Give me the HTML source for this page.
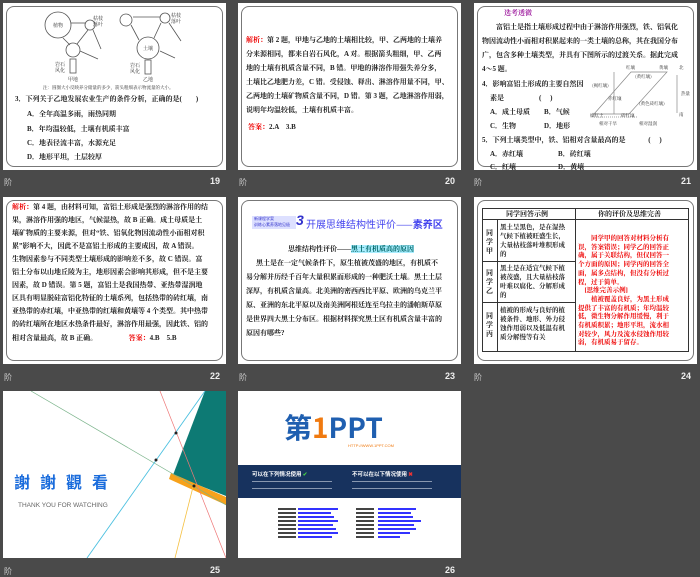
<!DOCTYPE html>
<html><head><meta charset="utf-8"><style>
*{margin:0;padding:0;box-sizing:border-box}
body{width:700px;height:577px;background:#4a4a4a;position:relative;overflow:hidden;font-family:"Liberation Sans","Noto Sans CJK SC",sans-serif}
.s{position:absolute;width:223px;height:167px;background:#fff;overflow:hidden}
.b{position:absolute;left:3px;top:3px;right:3px;bottom:3px;border:1px solid #777;border-radius:8px}
.t{position:absolute;font-size:7px;font-weight:bold;color:#222;white-space:nowrap;line-height:9px;font-family:"Liberation Serif","Noto Serif CJK SC",serif}
.r{color:#e00}
.n{position:absolute;color:#eee;font-size:9px;font-weight:bold}
.i{position:absolute;color:#ccc;font-size:8px}
</style></head><body>

<!-- slide 19 -->
<div class="s" style="left:3px;top:3px"><div class="b"></div>
<svg width="223" height="90" style="position:absolute;left:0;top:0" font-size="5" fill="#333" font-family="Noto Serif CJK SC,serif">
<g fill="none" stroke="#555" stroke-width="0.8">
<circle cx="55" cy="22" r="13"/><circle cx="87" cy="22" r="5"/><circle cx="70" cy="47" r="7"/>
<line x1="68" y1="20" x2="82" y2="20"/><line x1="85" y1="27" x2="74" y2="41"/><line x1="90" y1="27" x2="98" y2="46"/><line x1="77" y1="48" x2="95" y2="56"/><line x1="60" y1="35" x2="67" y2="42"/>
<rect x="67" y="56" width="6" height="14"/>
<circle cx="123" cy="17" r="6"/><circle cx="162" cy="15" r="5"/><circle cx="145" cy="45" r="11"/>
<line x1="130" y1="14" x2="157" y2="14"/><line x1="158" y1="20" x2="151" y2="35"/><line x1="166" y1="20" x2="178" y2="38"/><line x1="157" y1="48" x2="172" y2="55"/><line x1="128" y1="22" x2="136" y2="37"/>
<rect x="142" y="57" width="6" height="14"/>
</g>
<text x="50" y="24">植物</text><text x="90" y="17">枯枝</text><text x="90" y="23">落叶</text><text x="140" y="47">土壤</text><text x="168" y="14">枯枝</text><text x="168" y="20">落叶</text>
<text x="52" y="63">岩石</text><text x="52" y="69">风化</text><text x="127" y="64">岩石</text><text x="127" y="70">风化</text>
<text x="65" y="78">甲地</text><text x="140" y="78">乙地</text>
<text x="40" y="86" font-size="4.5">注：圆圈大小反映养分储量的多少，箭头粗细表示物流量的大小。</text>
</svg>
<div class="t" style="left:12px;top:92px">3．下列关于乙地发展农业生产的条件分析，正确的是(　　)</div>
<div class="t" style="left:24px;top:107px">A．全年高温多雨，雨热同期</div>
<div class="t" style="left:24px;top:122px">B．年均温较低，土壤有机质丰富</div>
<div class="t" style="left:24px;top:136px">C．地表径流丰富，水源充足</div>
<div class="t" style="left:24px;top:150px">D．地形平坦，土层较厚</div>
</div>
<div class="i" style="left:4px;top:177px">阶</div><div class="n" style="left:210px;top:176px">19</div>

<!-- slide 20 -->
<div class="s" style="left:238px;top:3px"><div class="b"></div>
<div class="t" style="left:8px;top:33px"><span class="r">解析：</span>第 2 题，甲地与乙地的土壤相比较，甲、乙两地的土壤养</div>
<div class="t" style="left:8px;top:47px">分来源相同，都来自岩石风化，A 对。根据箭头粗细，甲、乙两</div>
<div class="t" style="left:8px;top:61px">地的土壤有机质含量不同，B 错。甲地的淋溶作用强失养分多，</div>
<div class="t" style="left:8px;top:75px">土壤比乙地肥力差，C 错。受侵蚀、释出、淋溶作用量不同，甲、</div>
<div class="t" style="left:8px;top:89px">乙两地的土壤矿物质含量不同，D 错。第 3 题，乙地淋溶作用弱，</div>
<div class="t" style="left:8px;top:103px">说明年均温较低，土壤有机质丰富。</div>
<div class="t" style="left:10px;top:120px"><span class="r">答案：</span>2.A　3.B</div>
</div>
<div class="i" style="left:239px;top:177px">阶</div><div class="n" style="left:445px;top:176px">20</div>

<!-- slide 21 -->
<div class="s" style="left:474px;top:3px"><div class="b"></div>
<div class="t" style="left:30px;top:6px;color:#a020a0">选考透微</div>
<div class="t" style="left:22px;top:20px">富铝土是指土壤形成过程中由于淋溶作用强烈，铁、铝氧化</div>
<div class="t" style="left:8px;top:34px">物因流动性小而相对积累起来的一类土壤的总称，其在我国分布</div>
<div class="t" style="left:8px;top:48px">广，包含多种土壤类型，并具有下图所示的过渡关系。据此完成</div>
<div class="t" style="left:8px;top:62px">4～5 题。</div>
<div class="t" style="left:8px;top:77px">4．影响富铝土形成的主要自然因</div>
<div class="t" style="left:16px;top:91px">素是　　　　　(　 )</div>
<div class="t" style="left:16px;top:105px">A．成土母质　　B．气候</div>
<div class="t" style="left:16px;top:119px">C．生物　　　　D．地形</div>
<div class="t" style="left:8px;top:133px">5．下列土壤类型中，铁、铝相对含量最高的是　　　 (　 )</div>
<div class="t" style="left:16px;top:147px">A．赤红壤　　　　　B．砖红壤</div>
<div class="t" style="left:16px;top:160px">C．红壤　　　　　　D．黄壤</div>
<svg width="223" height="167" style="position:absolute;left:0;top:0" font-size="4.5" fill="#333" font-family="Noto Serif CJK SC,serif">
<g fill="none" stroke="#888" stroke-width="0.7"><path d="M120 111 L157 69 L193 69 L155 111 Z"/><line x1="140" y1="69" x2="140" y2="111"/><line x1="163" y1="114" x2="120" y2="114" stroke-dasharray="1,1"/><line x1="203" y1="72" x2="203" y2="110"/></g>
<text x="152" y="66">红壤</text><text x="185" y="66">黄壤</text><text x="161" y="75">(黄红壤)</text><text x="118" y="84">(褐红壤)</text><text x="134" y="97">赤红壤</text><text x="165" y="102">(黄色砖红壤)</text><text x="116" y="114">燥红土</text><text x="147" y="114">砖红壤</text><text x="125" y="122">相对干旱</text><text x="165" y="122">相对湿润</text><text x="205" y="66">北</text><text x="207" y="92">热量</text><text x="205" y="113">南</text>
</svg>
</div>
<div class="i" style="left:474px;top:177px">阶</div><div class="n" style="left:681px;top:176px">21</div>

<!-- slide 22 -->
<div class="s" style="left:3px;top:197px"><div class="b"></div>
<div class="t" style="left:9px;top:6px"><span class="r">解析：</span>第 4 题，由材料可知，富铝土形成是强烈的淋溶作用的结</div>
<div class="t" style="left:9px;top:19px">果，淋溶作用强的地区，气候湿热，故 B 正确。成土母质是土</div>
<div class="t" style="left:9px;top:32px">壤矿物质的主要来源，但对“铁、铝氧化物因流动性小而相对积</div>
<div class="t" style="left:9px;top:45px">累”影响不大，因此不是富铝土形成的主要成因，故 A 错误。</div>
<div class="t" style="left:9px;top:58px">生物因素参与不同类型土壤形成的影响差不多，故 C 错误。富</div>
<div class="t" style="left:9px;top:71px">铝土分布以山地丘陵为主，地形因素会影响其形成，但不是主要</div>
<div class="t" style="left:9px;top:84px">因素，故 D 错误。第 5 题，富铝土是我国热带、亚热带湿润地</div>
<div class="t" style="left:9px;top:97px">区具有明显脱硅富铝化特征的土壤系列，包括热带的砖红壤，南</div>
<div class="t" style="left:9px;top:110px">亚热带的赤红壤，中亚热带的红壤和黄壤等 4 个类型。其中热带</div>
<div class="t" style="left:9px;top:123px">的砖红壤所在地区水热条件最好，淋溶作用最强，因此铁、铝的</div>
<div class="t" style="left:9px;top:137px">相对含量最高，故 B 正确。　　　　　<span class="r">答案：</span>4.B　5.B</div>
</div>
<div class="i" style="left:4px;top:372px">阶</div><div class="n" style="left:210px;top:371px">22</div>

<!-- slide 23 -->
<div class="s" style="left:238px;top:197px"><div class="b"></div>
<div style="position:absolute;left:14px;top:19px;width:44px;height:13px;background:#dde0ff;font-size:4px;color:#33c;line-height:6px;padding-left:2px">新课程学案<br>训练心素养落地见极</div>
<div style="position:absolute;left:58px;top:15px;font-size:14px;font-weight:bold;color:#33c;font-style:italic">3</div>
<div style="position:absolute;left:68px;top:19px;font-size:10px;color:#44e;white-space:nowrap;font-family:'Noto Sans CJK SC',sans-serif">开展思维结构性评价——<b>素养区</b></div>
<div class="t" style="left:50px;top:48px">思维结构性评价——<span style="color:#066;background:#aef">黑土有机质高的原因</span></div>
<div class="t" style="left:18px;top:62px">黑土是在一定气候条件下，原生植被茂盛的地区，有机质不</div>
<div class="t" style="left:8px;top:76px">易分解并历经千百年大量积累而形成的一种肥沃土壤。黑土土层</div>
<div class="t" style="left:8px;top:90px">深厚，有机质含量高。北美洲的密西西比平原、欧洲的乌克兰平</div>
<div class="t" style="left:8px;top:104px">原、亚洲的东北平原以及南美洲阿根廷连至乌拉圭的潘帕斯草原</div>
<div class="t" style="left:8px;top:118px">是世界四大黑土分布区。根据材料探究黑土区有机质含量丰富的</div>
<div class="t" style="left:8px;top:132px">原因有哪些?</div>
</div>
<div class="i" style="left:239px;top:372px">阶</div><div class="n" style="left:445px;top:371px">23</div>

<!-- slide 24 -->
<div class="s" style="left:474px;top:197px"><div class="b"></div>
<div style="position:absolute;left:8px;top:11px;width:207px;height:144px;border:1px solid #333"></div>
<div style="position:absolute;left:8px;top:11px;width:207px;height:12px;border-bottom:1px solid #333"></div>
<div style="position:absolute;left:101px;top:11px;width:1px;height:144px;background:#333"></div>
<div style="position:absolute;left:23px;top:23px;width:1px;height:132px;background:#333"></div>
<div style="position:absolute;left:8px;top:64px;width:93px;height:1px;background:#333"></div>
<div style="position:absolute;left:8px;top:105px;width:93px;height:1px;background:#333"></div>
<div class="t" style="left:32px;top:13px">同学回答示例</div>
<div class="t" style="left:124px;top:13px">你的评价及思维完善</div>
<div class="t" style="left:12px;top:32px;line-height:9px">同<br>学<br>甲</div>
<div class="t" style="left:12px;top:72px;line-height:9px">同<br>学<br>乙</div>
<div class="t" style="left:12px;top:115px;line-height:9px">同<br>学<br>丙</div>
<div class="t" style="left:26px;top:26px;line-height:9px;font-size:6.5px">黑土呈黑色，是在湿热<br>气候下植被旺盛生长，<br>大量枯枝落叶堆积形成<br>的</div>
<div class="t" style="left:26px;top:67px;line-height:9px;font-size:6.5px">黑土是在适宜气候下植<br>被茂盛，且大量枯枝落<br>叶难以腐化、分解形成<br>的</div>
<div class="t" style="left:26px;top:109px;line-height:9px;font-size:6.5px">植被的形成与良好的植<br>被条件、地形、外力侵<br>蚀作用弱以及低温有机<br>质分解慢等有关</div>
<div class="t r" style="left:104px;top:38px;line-height:8.7px;font-size:6.5px">　　同学甲的回答对材料分析有<br>误，答案错误；同学乙的回答正<br>确，属于关联结构，但仅回答一<br>个方面的原因；同学丙的回答全<br>面，属多点结构，但没有分析过<br>程，过于简单。<br>　[思维完善示例]<br>　　植被覆盖良好，为黑土形成<br>提供了丰富的有机质；年均温较<br>低，微生物分解作用缓慢，利于<br>有机质积累；地形平坦，流水相<br>对较少，风力及流水侵蚀作用较<br>弱，有机质易于留存。</div>
</div>
<div class="i" style="left:474px;top:372px">阶</div><div class="n" style="left:681px;top:371px">24</div>

<!-- slide 25 -->
<div class="s" style="left:3px;top:391px">
<svg width="223" height="167" style="position:absolute;left:0;top:0">
<polygon points="202,0 223,0 223,105 170,84" fill="#0d7a74"/>
<polygon points="168,82 223,106 223,114 166,88" fill="#f7a21b"/>
<line x1="28" y1="0" x2="223" y2="114" stroke="#7ab38a" stroke-width="0.7"/>
<line x1="157" y1="0" x2="223" y2="167" stroke="#e77" stroke-width="0.7"/>
<line x1="202" y1="0" x2="84" y2="167" stroke="#4cc0e0" stroke-width="0.9"/>
<line x1="190" y1="96" x2="172" y2="167" stroke="#f5c040" stroke-width="0.8"/>
<circle cx="173" cy="42" r="1.5" fill="#222"/><circle cx="153" cy="69" r="1.5" fill="#222"/><circle cx="191" cy="95" r="1.5" fill="#222"/>
</svg>
<div style="position:absolute;left:11px;top:78px;font-size:16px;font-weight:bold;color:#1a6cdc;letter-spacing:10px;font-family:'Noto Sans CJK TC',sans-serif">謝謝觀看</div>
<div style="position:absolute;left:15px;top:111px;font-size:6.5px;color:#666;white-space:nowrap">THANK YOU FOR WATCHING</div>
</div>
<div class="i" style="left:4px;top:566px">阶</div><div class="n" style="left:210px;top:565px">25</div>

<!-- slide 26 -->
<div class="s" style="left:238px;top:391px">
<div style="position:absolute;left:46px;top:20px;font-size:28px;font-weight:bold;color:#1f5fb0;white-space:nowrap;font-family:'Noto Sans CJK SC',sans-serif;line-height:32px">第<span style="color:#f07a10">1</span>PPT</div>
<div style="position:absolute;left:110px;top:52px;font-size:4px;color:#f07a10">HTTP://WWW.1PPT.COM</div>
<div style="position:absolute;left:0;top:74px;width:223px;height:33px;background:#17325e"></div>
<div style="position:absolute;left:14px;top:79px;font-size:5.5px;color:#fff;font-weight:bold;font-family:'Noto Sans CJK SC',sans-serif">可以在下列情况使用 <span style="color:#4c4">✔</span></div>
<div style="position:absolute;left:114px;top:79px;font-size:5.5px;color:#fff;font-weight:bold;font-family:'Noto Sans CJK SC',sans-serif">不可以在以下情况使用 <span style="color:#e33">✖</span></div>
<div style="position:absolute;left:14px;top:90px;width:80px;height:1px;background:#8897b0;box-shadow:0 7px 0 #8897b0"></div>
<div style="position:absolute;left:114px;top:90px;width:80px;height:1px;background:#8897b0;box-shadow:0 7px 0 #8897b0"></div>
<svg width="223" height="50" style="position:absolute;left:0;top:115px">
<g fill="#444"><rect x="40" y="2" width="18" height="2"/><rect x="40" y="6" width="18" height="2"/><rect x="40" y="10" width="18" height="2"/><rect x="40" y="14" width="18" height="2"/><rect x="40" y="18" width="18" height="2"/><rect x="40" y="22" width="18" height="2"/><rect x="40" y="26" width="18" height="2"/><rect x="40" y="30" width="18" height="2"/>
<rect x="118" y="2" width="18" height="2"/><rect x="118" y="6" width="18" height="2"/><rect x="118" y="10" width="18" height="2"/><rect x="118" y="14" width="18" height="2"/><rect x="118" y="18" width="18" height="2"/><rect x="118" y="22" width="18" height="2"/><rect x="118" y="26" width="18" height="2"/><rect x="118" y="30" width="18" height="2"/></g>
<g fill="#33f"><rect x="60" y="2" width="40" height="2"/><rect x="60" y="6" width="33" height="2"/><rect x="60" y="10" width="36" height="2"/><rect x="60" y="14" width="40" height="2"/><rect x="60" y="18" width="35" height="2"/><rect x="60" y="22" width="38" height="2"/><rect x="60" y="26" width="40" height="2"/><rect x="60" y="30" width="34" height="2"/>
<rect x="140" y="2" width="38" height="2"/><rect x="140" y="6" width="33" height="2"/><rect x="140" y="10" width="35" height="2"/><rect x="140" y="14" width="43" height="2"/><rect x="140" y="18" width="36" height="2"/><rect x="140" y="22" width="38" height="2"/><rect x="140" y="26" width="32" height="2"/><rect x="140" y="30" width="22" height="2"/></g>
</svg>
</div>
<div class="n" style="left:445px;top:565px">26</div>

</body></html>
